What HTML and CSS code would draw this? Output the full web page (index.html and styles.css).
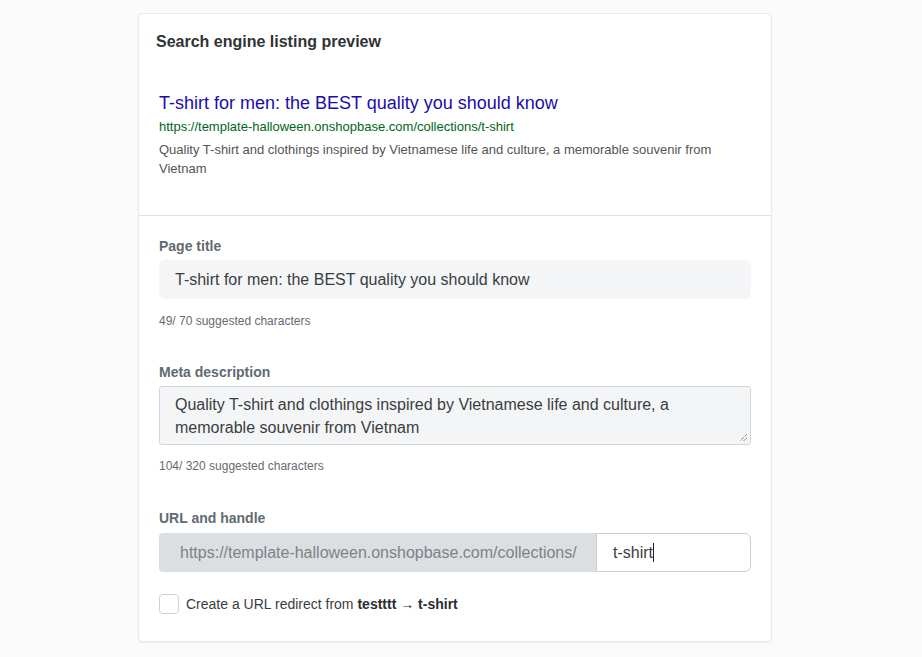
FILE: index.html
```html
<!DOCTYPE html>
<html>
<head>
<meta charset="utf-8">
<link rel="stylesheet" href="styles.css">
</head>
<body>
<div class="card">
  <div class="section preview-section">
    <h2 class="card-title">Search engine listing preview</h2>
    <div class="serp">
      <div class="serp-title">T-shirt for men: the BEST quality you should know</div>
      <div class="serp-url">https://template-halloween.onshopbase.com/collections/t-shirt</div>
      <div class="serp-desc">Quality T-shirt and clothings inspired by Vietnamese life and culture, a memorable souvenir from Vietnam</div>
    </div>
  </div>
  <div class="section form-section">
    <div class="field">
      <label class="label">Page title</label>
      <div class="input">T-shirt for men: the BEST quality you should know</div>
      <div class="help">49/ 70 suggested characters</div>
    </div>
    <div class="field">
      <label class="label">Meta description</label>
      <div class="textarea">Quality T-shirt and clothings inspired by Vietnamese life and culture, a memorable souvenir from Vietnam
        <svg class="grip" width="9" height="9" viewBox="0 0 9 9"><path d="M8 1 L1 8 M8 4.5 L4.5 8" stroke="#444" stroke-width="1" stroke-dasharray="1 1" fill="none"/></svg>
      </div>
      <div class="help">104/ 320 suggested characters</div>
    </div>
    <div class="field last">
      <label class="label">URL and handle</label>
      <div class="url-group">
        <div class="prefix">https://template-halloween.onshopbase.com/collections/</div>
        <div class="handle">t-shirt<span class="caret"></span></div>
      </div>
      <div class="check-row">
        <span class="checkbox"></span>
        <span class="check-text">Create a URL redirect from <b>testttt → t-shirt</b></span>
      </div>
    </div>
  </div>
</div>
</body>
</html>
```

FILE: styles.css
```css
* { box-sizing: border-box; }
html, body { margin: 0; padding: 0; }
body {
  background: #fbfbfb;
  font-family: "Liberation Sans", Arial, sans-serif;
  color: #333;
  height: 657px;
  overflow: hidden;
}
.card {
  margin: 13px 0 0 138px;
  width: 634px;
  background: #fff;
  border: 1px solid #e8e9eb;
  border-radius: 4px;
  box-shadow: 0 1px 2px rgba(0,0,0,0.06);
}
.section { padding: 0 20px; }
.preview-section {
  padding: 17px 20px 37px 17px;
  border-bottom: 1px solid #dfe1e3;
}
.card-title {
  margin: 0;
  font-size: 16px;
  line-height: 22px;
  font-weight: bold;
  color: #2f3337;
}
.serp { margin-top: 39px; padding-left: 3px; }
.serp-title {
  font-size: 18px;
  line-height: 22px;
  color: #1a0dab;
}
.serp-url {
  margin-top: 4px;
  font-size: 13px;
  line-height: 18px;
  color: #006621;
}
.serp-desc {
  margin-top: 4px;
  font-size: 13px;
  line-height: 19px;
  color: #545454;
  padding-right: 20px;
}
.form-section { padding: 22px 20px 27px 20px; }
.field { margin-bottom: 35px; }
.field.last { margin-bottom: 0; margin-top: 36px; }
.field + .field.last { margin-top: 0; }
.label {
  display: block;
  font-size: 14px;
  line-height: 17px;
  font-weight: bold;
  color: #5f6b73;
  margin-bottom: 5px;
}
.field.last .label { margin-bottom: 6px; }
.input {
  height: 39px;
  background: #f4f5f7;
  border-radius: 6px;
  font-size: 16px;
  line-height: 39px;
  padding: 0 16px;
  color: #3a3d40;
}
.help {
  margin-top: 14px;
  font-size: 12px;
  line-height: 16px;
  color: #666a6e;
}
.textarea {
  position: relative;
  height: 59px;
  background: #f4f5f7;
  border: 1px solid #d3d6d9;
  border-radius: 3px;
  font-size: 16px;
  line-height: 23px;
  padding: 6px 80px 0 15px;
  color: #3a3d40;
}
.textarea + .help { margin-top: 13px; }
.field:nth-child(2) { margin-bottom: 36px; }
.grip { position: absolute; right: 2px; bottom: 2px; }
.url-group {
  display: flex;
  height: 39px;
}
.prefix {
  flex: 0 0 437px;
  background: #dcdfe2;
  border-radius: 4px 0 0 4px;
  color: #7c8287;
  font-size: 16px;
  line-height: 39px;
  padding-left: 21px;
  white-space: nowrap;
}
.handle {
  flex: 1;
  background: #fff;
  border: 1px solid #c9cdd1;
  border-radius: 0 6px 6px 0;
  font-size: 16px;
  line-height: 37px;
  padding-left: 16px;
  color: #3a3d40;
  display: flex;
  align-items: center;
}
.caret {
  display: inline-block;
  width: 1px;
  height: 19px;
  background: #222;
}
.check-row {
  margin-top: 22px;
  display: flex;
  align-items: center;
}
.checkbox {
  width: 20px;
  height: 20px;
  border: 1px solid #d0d3d6;
  border-radius: 4px;
  background: #fff;
  margin-right: 7px;
}
.check-text {
  font-size: 14px;
  color: #3a3d40;
}
.check-text b { color: #2a2d30; }
```
